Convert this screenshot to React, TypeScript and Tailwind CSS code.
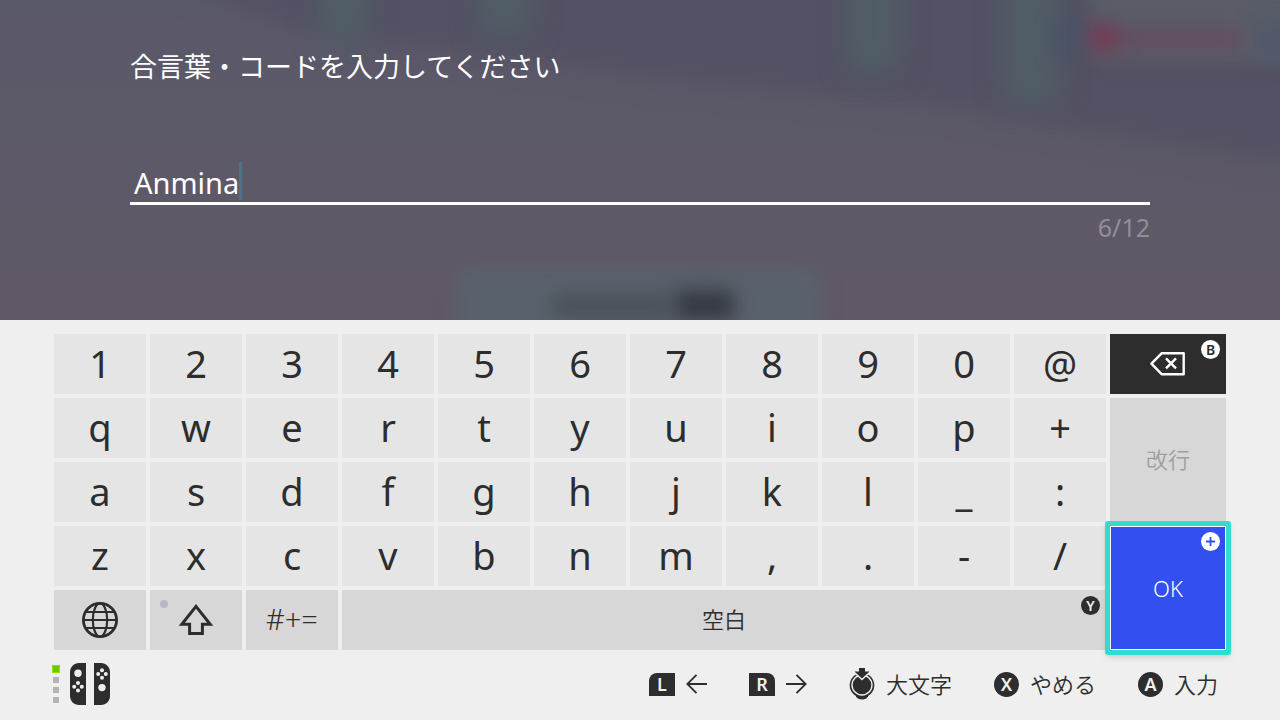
import { useState } from "react";
import type { ReactNode } from "react";

const MAX_LENGTH = 12;

const keyRows = [
  ["1", "2", "3", "4", "5", "6", "7", "8", "9", "0", "@"],
  ["q", "w", "e", "r", "t", "y", "u", "i", "o", "p", "+"],
  ["a", "s", "d", "f", "g", "h", "j", "k", "l", "_", ":"],
  ["z", "x", "c", "v", "b", "n", "m", ",", ".", "-", "/"],
];

const Backdrop = () => (
  <svg
    className="absolute inset-0 w-full h-full"
    viewBox="0 0 1280 320"
    preserveAspectRatio="none"
    aria-hidden="true"
  >
    <defs>
      <linearGradient id="base" x1="0" y1="0" x2="0" y2="1">
        <stop offset="0" stopColor="#5a596a" />
        <stop offset="0.5" stopColor="#5d5968" />
        <stop offset="1" stopColor="#615866" />
      </linearGradient>
      <filter id="soft" filterUnits="userSpaceOnUse" x="-60" y="-80" width="1400" height="480" colorInterpolationFilters="sRGB">
        <feGaussianBlur stdDeviation="13" />
      </filter>
      <filter id="fine" filterUnits="userSpaceOnUse" x="-60" y="-80" width="1400" height="480" colorInterpolationFilters="sRGB">
        <feGaussianBlur stdDeviation="9" />
      </filter>
    </defs>
    <rect width="1280" height="320" fill="url(#base)" />
    <path d="M60 -60 L1340 -60 V170 L1180 146 L940 106 L640 76 L300 30 Z" fill="#535163" filter="url(#soft)" />
    <g fill="#505d66" filter="url(#soft)">
      <rect x="318" y="-60" width="52" height="100" />
      <rect x="478" y="-60" width="54" height="96" />
      <rect x="846" y="-60" width="54" height="132" />
      <rect x="1004" y="-60" width="56" height="164" />
    </g>
    <rect x="1090" y="-60" width="260" height="122" fill="#5a5d68" filter="url(#fine)" />
    <rect x="1054" y="22" width="28" height="34" fill="#4a5369" filter="url(#fine)" />
    <rect x="1256" y="20" width="40" height="40" fill="#52586a" filter="url(#fine)" />
    <rect x="1118" y="30" width="122" height="18" fill="#674a5f" filter="url(#fine)" />
    <rect x="1090" y="24" width="28" height="28" fill="#733b55" filter="url(#fine)" />
    <rect x="456" y="268" width="364" height="110" rx="8" fill="#59626c" filter="url(#fine)" />
    <rect x="552" y="294" width="120" height="24" fill="#4a5157" filter="url(#fine)" />
    <rect x="676" y="290" width="58" height="30" fill="#373943" filter="url(#fine)" />
  </svg>
);

const GlobeIcon = () => (
  <svg width="36" height="36" viewBox="0 0 36 36" fill="none" stroke="#2d2d2d" aria-hidden="true">
    <circle cx="18" cy="18" r="16.6" strokeWidth="2.8" />
    <ellipse cx="18" cy="18" rx="7.2" ry="16.6" strokeWidth="2.2" />
    <path d="M4 10H32M1.5 18H34.5M4 26H32" strokeWidth="2" />
  </svg>
);

const ShiftIcon = () => (
  <svg width="36" height="32" viewBox="0 0 36 32" fill="none" stroke="#2d2d2d" strokeWidth="3" aria-hidden="true">
    <path d="M18 2.4L32.2 20.2H24.4V29.5H11.6V20.2H3.8Z" />
  </svg>
);

const DeleteIcon = () => (
  <svg width="36" height="24" viewBox="0 0 36 24" fill="none" stroke="#fff" strokeWidth="2.4" strokeLinejoin="round" aria-hidden="true">
    <path d="M1.4 11.7L11.6 1.3H33.7V22.2H11.6Z" />
    <path d="M16 6.4L26 16.4M26 6.4L16 16.4" />
  </svg>
);

const ArrowIcon = ({ flip = false }: { flip?: boolean }) => (
  <svg
    width="21"
    height="20"
    viewBox="0 0 21 20"
    fill="none"
    stroke="#2d2d2d"
    strokeWidth="1.8"
    aria-hidden="true"
    className={flip ? "rotate-180" : ""}
  >
    <path d="M21 10H1.5M10.5 0.8L1.3 10L10.5 19.2" />
  </svg>
);

const StickIcon = () => (
  <svg width="26" height="32" viewBox="0 0 26 32" aria-hidden="true">
    <path d="M7 25H19V28.6C18 30.6 16 31.6 13 31.6S8 30.6 7 28.6Z" fill="#2d2d2d" />
    <circle cx="13" cy="17.3" r="12.3" fill="#2d2d2d" />
    <circle cx="13" cy="17" r="10" fill="#2d2d2d" stroke="#efefef" strokeWidth="1.4" />
    <path d="M10 -1H16V2.6H23.6L13 12.6L2.4 2.6H10Z" fill="#efefef" />
    <path d="M10 0H16V3.6H20.6L13 10.6L5.4 3.6H10Z" fill="#2d2d2d" />
  </svg>
);

const ControllerIcon = () => (
  <svg width="40" height="42" viewBox="0 0 40 42" aria-hidden="true">
    <path d="M16 0V42H9C4 42 0 38 0 33V9C0 4 4 0 9 0Z" fill="#2d2d2d" />
    <path d="M24 0V42H31C36 42 40 38 40 33V9C40 4 36 0 31 0Z" fill="#2d2d2d" />
    <g fill="#efefef">
      <circle cx="8" cy="10.2" r="3.7" />
      <circle cx="8" cy="20" r="2" />
      <circle cx="8" cy="27.4" r="2" />
      <circle cx="4.2" cy="23.7" r="2" />
      <circle cx="11.8" cy="23.7" r="2" />
      <circle cx="32" cy="24.6" r="3.7" />
      <circle cx="32" cy="7.3" r="2" />
      <circle cx="32" cy="14.7" r="2" />
      <circle cx="28.2" cy="11" r="2" />
      <circle cx="35.8" cy="11" r="2" />
    </g>
  </svg>
);

const PlusIcon = () => (
  <svg width="9" height="9" viewBox="0 0 9 9" stroke="#324ff0" strokeWidth="1.8" aria-hidden="true">
    <path d="M4.5 0V9M0 4.5H9" />
  </svg>
);

const Badge = ({ dark = false, children }: { dark?: boolean; children: ReactNode }) => (
  <span
    className={`absolute top-1.5 right-1.5 size-[19px] rounded-full flex items-center justify-center text-[14px] leading-none font-semibold ${
      dark ? "bg-[#2d2d2d] text-[#efefef]" : "bg-white text-[#2d2d2d]"
    }`}
  >
    {children}
  </span>
);

const Round = ({ children }: { children: ReactNode }) => (
  <span className="size-[25px] rounded-full bg-[#2d2d2d] text-[#efefef] flex items-center justify-center text-[18px] leading-none font-semibold">
    {children}
  </span>
);

const Hint = ({ children, label }: { children: ReactNode; label?: string }) => (
  <button className="flex items-center gap-[11px] text-[22px] leading-8 font-[350] cursor-pointer" aria-label={label}>
    {children}
  </button>
);

const App = () => {
  const [value, setValue] = useState("Anmina");

  const type = (char: string) => setValue((v) => (v + char).slice(0, MAX_LENGTH));

  return (
    <div className="min-h-screen flex flex-col bg-[#efefef] text-[#2d2d2d] font-['Noto_Sans','Noto_Sans_CJK_JP',sans-serif]">
      <section className="relative overflow-hidden">
        <Backdrop />
        <div className="relative px-[130px] pt-12 pb-[76px] text-white">
          <label htmlFor="code" className="block text-[27px] leading-9 font-['Noto_Sans_CJK_JP',sans-serif]">
            合言葉・コードを入力してください
          </label>
          <div className="mt-[78px] pl-1 h-[43px] flex items-start border-b-3 border-white">
            <input
              id="code"
              value={value}
              maxLength={MAX_LENGTH}
              onChange={(e) => setValue(e.target.value)}
              className="[field-sizing:content] h-[42px] text-[29px] leading-[42px] outline-none caret-transparent"
            />
            <span className="w-[3px] h-[38px] bg-[#4b7389]" />
          </div>
          <div className="mt-1.5 mb-px text-right text-[25px] leading-8 text-[#938d98]">
            {value.length}/{MAX_LENGTH}
          </div>
        </div>
      </section>

      <main className="px-[54px] pt-3.5 grid grid-cols-[repeat(11,92fr)_116fr] auto-rows-[60px] gap-1">
        {keyRows.map((row, r) => (
          <div key={r} className="contents">
            {row.map((char) => (
              <button
                key={char}
                onClick={() => type(char)}
                className="pb-0.5 bg-[#e5e5e5] text-[38px] leading-[58px] cursor-pointer"
              >
                {char}
              </button>
            ))}
            {r === 0 && (
              <button
                aria-label="削除"
                onClick={() => setValue((v) => v.slice(0, -1))}
                className="relative bg-[#2d2d2d] flex items-center justify-center cursor-pointer"
              >
                <DeleteIcon />
                <Badge>B</Badge>
              </button>
            )}
            {r === 1 && (
              <button disabled className="row-span-2 pb-0.5 bg-[#d7d7d7] text-[#9f9f9f] text-[22px] font-[350]">
                改行
              </button>
            )}
            {r === 3 && (
              <button className="row-span-2 -m-[5px] z-10 flex rounded-[3px] border-5 border-[#33dccf] shadow-md cursor-pointer">
                <span className="relative flex-1 self-stretch flex items-center justify-center bg-[#324ff0] border border-white text-white text-[22px] font-[350]">
                  OK
                  <span className="absolute top-[5px] right-[5px] size-[19px] rounded-full bg-white flex items-center justify-center">
                    <PlusIcon />
                  </span>
                </span>
              </button>
            )}
          </div>
        ))}
        <button aria-label="言語" className="bg-[#d7d7d7] flex items-center justify-center cursor-pointer">
          <GlobeIcon />
        </button>
        <button aria-label="シフト" className="relative bg-[#d7d7d7] flex items-center justify-center cursor-pointer">
          <span className="absolute top-2.5 left-2.5 size-2 rounded-full bg-[#b6b8c4]" />
          <ShiftIcon />
        </button>
        <button className="pb-0.5 bg-[#d7d7d7] text-[29px] leading-[58px] font-light cursor-pointer">#+=</button>
        <button
          onClick={() => type(" ")}
          className="relative col-span-8 pb-0.5 bg-[#d7d7d7] text-[22px] font-[350] cursor-pointer"
        >
          空白
          <Badge dark>Y</Badge>
        </button>
      </main>

      <footer className="pl-[52px] pr-[62px] h-[70px] pb-0.5 flex items-center justify-between">
        <div className="flex items-center gap-2.5">
          <div className="flex flex-col items-center gap-1">
            <span className="size-2 bg-[#6bc800] border border-[#8be000]" />
            <span className="size-1.5 bg-[#b3b3b3]" />
            <span className="size-1.5 bg-[#b3b3b3]" />
            <span className="size-1.5 bg-[#b3b3b3]" />
          </div>
          <ControllerIcon />
        </div>
        <div className="flex items-center gap-[42px]">
          <Hint label="カーソルを左へ">
            <span className="w-[26px] h-[23px] rounded-tl-[8px] bg-[#2d2d2d] text-[#efefef] flex items-center justify-center text-[18px] leading-none font-semibold">
              L
            </span>
            <ArrowIcon />
          </Hint>
          <Hint label="カーソルを右へ">
            <span className="w-[26px] h-[23px] rounded-tr-[8px] bg-[#2d2d2d] text-[#efefef] flex items-center justify-center text-[18px] leading-none font-semibold">
              R
            </span>
            <ArrowIcon flip />
          </Hint>
          <Hint>
            <StickIcon />
            大文字
          </Hint>
          <Hint>
            <Round>X</Round>
            やめる
          </Hint>
          <Hint>
            <Round>A</Round>
            入力
          </Hint>
        </div>
      </footer>
    </div>
  );
};

export default App;
